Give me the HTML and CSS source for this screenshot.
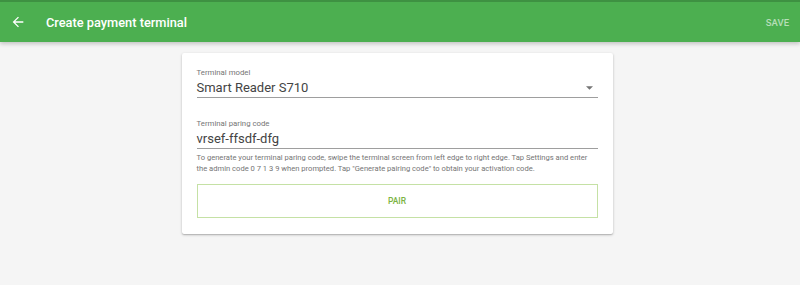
FILE: index.html
```html
<!DOCTYPE html>
<html>
<head>
<meta charset="utf-8">
<link rel="stylesheet" href="styles.css">
</head>
<body>
<header class="appbar">
  <div class="bar-left">
    <svg class="back" width="16" height="16" viewBox="0 0 24 24"><path d="M20 11H7.83l5.59-5.59L12 4l-8 8 8 8 1.41-1.41L7.83 13H20v-2z" fill="#fff"/></svg>
    <h1 class="title">Create payment terminal</h1>
  </div>
  <span class="save">SAVE</span>
</header>
<main class="content">
  <section class="card">
    <div class="field">
      <label class="label">Terminal model</label>
      <div class="value select">
        <span>Smart Reader S710</span>
        <svg class="caret" width="7" height="4" viewBox="0 0 10 5"><path d="M0 0h10L5 5z" fill="#757575"/></svg>
      </div>
    </div>
    <div class="field second">
      <label class="label">Terminal paring code</label>
      <div class="value"><span>vrsef-ffsdf-dfg</span></div>
    </div>
    <p class="help">To generate your terminal paring code, swipe the terminal screen from left edge to right edge. Tap Settings and enter the admin code 0 7 1 3 9 when prompted. Tap "Generate pairing code" to obtain your activation code.</p>
    <button class="pair">PAIR</button>
  </section>
</main>
</body>
</html>
```
FILE: styles.css
```css
* { box-sizing: border-box; }
html, body { margin: 0; padding: 0; }
body {
  background: #f5f5f5;
  font-family: Roboto, "Noto Sans", Arial, sans-serif;
  width: 800px;
  height: 285px;
  overflow: hidden;
}
.appbar {
  height: 42px;
  background: #4caf50;
  border-top: 2px solid #3e9142;
  display: flex;
  align-items: center;
  justify-content: space-between;
  padding: 0 11px 0 10px;
  box-shadow: 0 2px 4px rgba(0,0,0,0.2);
}
.bar-left { display: flex; align-items: center; }
.back { display: block; }
.title {
  margin: 0 0 0 20px;
  font-size: 12.8px;
  font-weight: 500;
  color: #fff;
}
.save {
  font-size: 9.5px;
  font-weight: 500;
  color: rgba(255,255,255,0.6);
}
.content {
  display: flex;
  justify-content: center;
  padding-top: 11px;
  padding-right: 6px;
}
.card {
  width: 431px;
  background: #fff;
  box-shadow: 0 1px 3px rgba(0,0,0,0.2), 0 1px 1px rgba(0,0,0,0.14);
  border-radius: 2px;
  padding: 15px 15px 16px 15px;
}
.label {
  display: block;
  font-size: 7.8px;
  color: #757575;
  line-height: 10px;
}
.value {
  display: flex;
  justify-content: space-between;
  align-items: center;
  font-size: 13px;
  color: #444;
  height: 20px;
  border-bottom: 1px solid #9e9e9e;
}
.caret { margin-right: 5px; }
.second { margin-top: 21px; }
.help {
  margin: 3px 0 0 0;
  font-size: 7.6px;
  line-height: 11px;
  color: #757575;
}
.pair {
  display: block;
  width: 100%;
  height: 34px;
  margin-top: 10px;
  background: #fff;
  border: 1px solid #c5e1a5;
  color: #7cb342;
  font-family: inherit;
  font-size: 8.5px;
  font-weight: 500;
}
```
